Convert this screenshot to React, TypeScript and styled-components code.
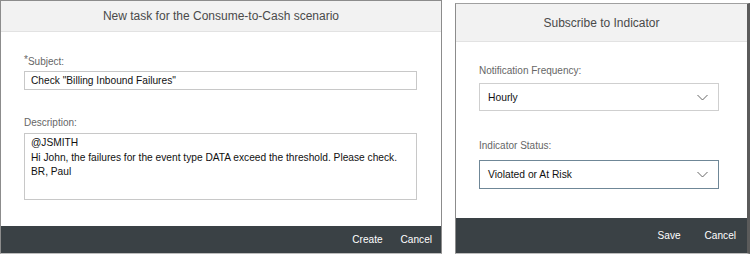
import styled, { createGlobalStyle } from "styled-components";

const Global = createGlobalStyle`
  html, body {
    margin: 0;
    padding: 0;
    background: #fff;
  }
  body {
    font-family: "Liberation Sans", Arial, sans-serif;
    color: #333;
  }
`;

const Page = styled.div`
  display: flex;
  align-items: flex-start;
  gap: 13px;
  width: 750px;
  height: 256px;
  overflow: hidden;
`;

const Dialog = styled.div<{ $w: number; $h: number; $top?: number }>`
  box-sizing: border-box;
  width: ${(p) => p.$w}px;
  height: ${(p) => p.$h}px;
  margin-top: ${(p) => p.$top ?? 0}px;
  display: flex;
  flex-direction: column;
  background: #fff;
  border: 1px solid #8c8c8c;
  border-bottom-color: #bdbdbd;
`;

const RightDialog = styled(Dialog)`
  border-right: 3px solid #5b5b5b;
  border-top-color: #a0a0a0;
`;

const Header = styled.div<{ $h: number }>`
  height: ${(p) => p.$h}px;
  flex: none;
  background: #f2f2f2;
  border-bottom: 1px solid #e2e2e2;
  display: flex;
  align-items: center;
  justify-content: center;
  font-size: 12px;
  color: #4a4a4a;
`;

const Body = styled.div<{ $pad: string }>`
  flex: 1;
  padding: ${(p) => p.$pad};
  display: flex;
  flex-direction: column;
`;

const Label = styled.div<{ $mt?: number; $mb: number }>`
  font-size: 10px;
  line-height: 12px;
  color: #666;
  margin-top: ${(p) => p.$mt ?? 0}px;
  margin-bottom: ${(p) => p.$mb}px;
`;

const Req = styled.span`
  color: #666;
  font-size: 10px;
  vertical-align: 2px;
`;

const Input = styled.div`
  box-sizing: border-box;
  height: 19px;
  border: 1px solid #c8c8c8;
  padding: 0 6px;
  display: flex;
  align-items: center;
  font-size: 10.2px;
  color: #111;
`;

const TextArea = styled.div`
  box-sizing: border-box;
  height: 67px;
  border: 1px solid #c8c8c8;
  padding: 2px 6px;
  font-size: 10.2px;
  line-height: 14.5px;
  color: #111;
`;

const Select = styled.div<{ $focus?: boolean; $h: number }>`
  box-sizing: border-box;
  height: ${(p) => p.$h}px;
  border: 1px solid ${(p) => (p.$focus ? "#6f8797" : "#cfcfcf")};
  padding: 0 10px 0 8px;
  display: flex;
  align-items: center;
  justify-content: space-between;
  font-size: 10.3px;
  color: #111;
`;

const Chevron = () => (
  <svg width="11" height="7" viewBox="0 0 11 7">
    <path d="M0.5 1 L5.5 6 L10.5 1" fill="none" stroke="#666" strokeWidth="1" />
  </svg>
);

const Footer = styled.div<{ $h: number; $gap: number; $pr: number }>`
  height: ${(p) => p.$h}px;
  flex: none;
  background: #3a4145;
  display: flex;
  align-items: center;
  justify-content: flex-end;
  gap: ${(p) => p.$gap}px;
  padding-right: ${(p) => p.$pr}px;
`;

const FooterButton = styled.span`
  color: #fff;
  font-size: 10.1px;
`;

export default function App() {
  return (
    <>
      <Global />
      <Page>
        <Dialog $w={442} $h={254}>
          <Header $h={30}>New task for the Consume-to-Cash scenario</Header>
          <Body $pad="22px 24px 0 23px">
            <Label $mb={3}>
              <Req>*</Req>Subject:
            </Label>
            <Input>Check "Billing Inbound Failures"</Input>
            <Label $mt={27} $mb={4}>
              Description:
            </Label>
            <TextArea>
              @JSMITH
              <br />
              Hi John, the failures for the event type DATA exceed the threshold. Please check.
              <br />
              BR, Paul
            </TextArea>
          </Body>
          <Footer $h={27} $gap={18} $pr={9}>
            <FooterButton>Create</FooterButton>
            <FooterButton>Cancel</FooterButton>
          </Footer>
        </Dialog>
        <RightDialog $w={295} $h={251} $top={3}>
          <Header $h={37}>Subscribe to Indicator</Header>
          <Body $pad="23px 28px 0 23px">
            <Label $mb={6}>Notification Frequency:</Label>
            <Select $h={28}>
              Hourly
              <Chevron />
            </Select>
            <Label $mt={29} $mb={8}>
              Indicator Status:
            </Label>
            <Select $h={29} $focus>
              Violated or At Risk
              <Chevron />
            </Select>
          </Body>
          <Footer $h={35} $gap={24} $pr={11}>
            <FooterButton>Save</FooterButton>
            <FooterButton>Cancel</FooterButton>
          </Footer>
        </RightDialog>
      </Page>
    </>
  );
}
